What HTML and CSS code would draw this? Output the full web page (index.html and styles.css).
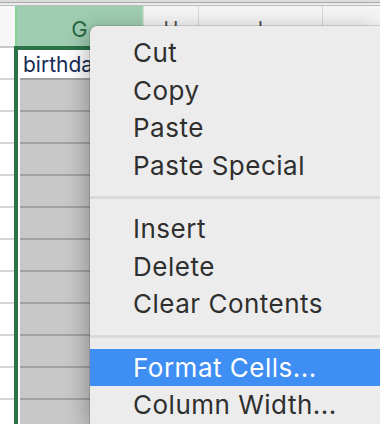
FILE: index.html
```html
<!DOCTYPE html>
<html lang="en">
<head>
  <meta charset="UTF-8">
  <meta name="viewport" content="width=device-width, initial-scale=1.0">
  <title>Sheet - context menu</title>
  <link rel="stylesheet" href="styles.css">
</head>
<body>
  <div class="chrome"></div>
  <div class="sheet">
    <div class="col col-f">
      <div class="head"></div>
      <div class="cell"></div>
      <div class="cell"></div>
      <div class="cell"></div>
      <div class="cell"></div>
      <div class="cell"></div>
      <div class="cell"></div>
      <div class="cell"></div>
      <div class="cell"></div>
      <div class="cell"></div>
      <div class="cell"></div>
      <div class="cell"></div>
      <div class="cell"></div>
    </div>

    <div class="col col-g">
      <div class="head head-sel">G</div>
      <div class="selection">
        <div class="cell cell-active">birthday</div>
        <div class="cell cell-sel"></div>
        <div class="cell cell-sel"></div>
        <div class="cell cell-sel"></div>
        <div class="cell cell-sel"></div>
        <div class="cell cell-sel"></div>
        <div class="cell cell-sel"></div>
        <div class="cell cell-sel"></div>
        <div class="cell cell-sel"></div>
        <div class="cell cell-sel"></div>
        <div class="cell cell-sel"></div>
        <div class="cell cell-sel"></div>
      </div>
    </div>

    <div class="col col-h">
      <div class="head">H</div>
    </div>
    <div class="col col-i">
      <div class="head">I</div>
    </div>
    <div class="col col-j">
      <div class="head"></div>
    </div>
  </div>

  <ul class="menu">
    <li class="item">Cut</li>
    <li class="item">Copy</li>
    <li class="item">Paste</li>
    <li class="item">Paste Special</li>
    <li class="sep"></li>
    <li class="item">Insert</li>
    <li class="item">Delete</li>
    <li class="item">Clear Contents</li>
    <li class="sep"></li>
    <li class="item item-active">Format Cells...</li>
    <li class="item">Column Width...</li>
  </ul>
</body>
</html>
```

FILE: styles.css
```css
body {
  margin: 0;
  width: 380px;
  height: 424px;
  overflow: hidden;
  background-color: #ffffff;
  font-family: Inter, "Liberation Sans", sans-serif;
  position: relative;
}
.chrome {
  height: 6px;
  background: linear-gradient(#dcdcdc 0 2px, #a9a9a9 2px 3px, #ececec 3px 5px, #bdbdbd 5px 6px);
}
.sheet {
  display: flex;
  align-items: flex-start;
  overflow: hidden;
  height: 418px;
}
.col {
  flex: none;
}
.head {
  height: 40px;
  box-sizing: border-box;
  background-color: #f4f4f4;
  border-left: 1px solid #d9d9d9;
  text-align: center;
  font-size: 20px;
  line-height: 46px;
  color: #505050;
}
.col-f {
  width: 15px;
}
.col-f .head {
  border-left: none;
  background-color: #f7f7f7;
  border-bottom: 2px solid #c8c8c8;
  height: 42px;
}
.col-f .cell {
  height: 32px;
  box-sizing: border-box;
  border-bottom: 2px solid #d6d6d6;
}
.col-g {
  width: 128px;
}
.head-sel {
  background-color: #9fcdb2;
  border-left: 2px solid #7fd48f;
  border-right: 1px solid #a9e2b4;
  color: #2c6944;
  font-size: 22px;
}
.selection {
  margin-left: -1px;
  border-left: 4px solid #2b7347;
  border-top: 4px solid #2b7347;
  padding-left: 2px;
}
.cell {
  height: 32px;
  box-sizing: border-box;
}
.cell-active {
  height: 30px;
  border-bottom: 2px solid #a2a2a2;
  padding-left: 3px;
  font-size: 21px;
  line-height: 30px;
  color: #172a55;
  white-space: nowrap;
}
.cell-sel {
  background-color: #c8c8c8;
  border-bottom: 2px solid #a2a2a2;
}
.col-h {
  width: 55px;
}
.col-i {
  width: 124px;
}
.col-j {
  width: 58px;
}

/* context menu, lies over the sheet */
.menu {
  position: absolute;
  left: 90px;
  top: 26px;
  right: 0;
  bottom: 0;
  margin: 0;
  padding: 8px 0 0;
  list-style: none;
  background-color: #ececec;
  border-radius: 7px 0 0 0;
  box-shadow: 0 0 0 1px rgba(0,0,0,0.12), -4px 4px 22px rgba(0,0,0,0.28);
}
.item {
  height: 37.5px;
  line-height: 37.5px;
  padding-left: 43px;
  font-size: 26px;
  letter-spacing: 0.5px;
  color: #2f2f2f;
  white-space: nowrap;
}
.item-active {
  background-color: #3f8ef3;
  color: #ffffff;
}
.sep {
  height: 3px;
  margin: 12px 0 11px;
  background-color: #dadada;
}
```
